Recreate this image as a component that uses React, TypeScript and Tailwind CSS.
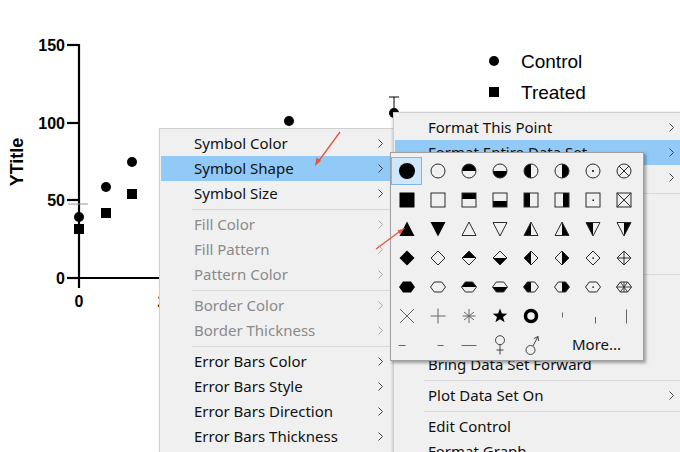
import React from 'react';

type Item = { label: string; sub?: boolean; disabled?: boolean; active?: boolean } | 'sep';

const leftItems: Item[] = [
  { label: 'Symbol Color', sub: true },
  { label: 'Symbol Shape', sub: true, active: true },
  { label: 'Symbol Size', sub: true },
  'sep',
  { label: 'Fill Color', sub: true, disabled: true },
  { label: 'Fill Pattern', sub: true, disabled: true },
  { label: 'Pattern Color', sub: true, disabled: true },
  'sep',
  { label: 'Border Color', sub: true, disabled: true },
  { label: 'Border Thickness', sub: true, disabled: true },
  'sep',
  { label: 'Error Bars Color', sub: true },
  { label: 'Error Bars Style', sub: true },
  { label: 'Error Bars Direction', sub: true },
  { label: 'Error Bars Thickness', sub: true },
  'sep',
];

const rightItems: Item[] = [
  { label: 'Format This Point', sub: true },
  { label: 'Format Entire Data Set', sub: true, active: true },
  { label: 'Format Data Set Line', sub: true },
  'sep',
  { label: 'Delete Data Set' },
  { label: 'Hide Data Set' },
  { label: 'Remove Data Set' },
  'sep',
  { label: 'Add Data Set' },
  { label: 'Send Data Set Back' },
  { label: 'Send Data Set Backward' },
  { label: 'Bring Data Set Forward' },
  'sep',
  { label: 'Plot Data Set On', sub: true },
  'sep',
  { label: 'Edit Control' },
  { label: 'Format Graph' },
];

function Chevron({ dim }: { dim?: boolean }) {
  return (
    <svg width="5" height="9" viewBox="0 0 5 9" className={dim ? 'text-[#a8a8a8]' : 'text-[#444]'}>
      <polyline points="0.5,0.5 4.5,4.5 0.5,8.5" fill="none" stroke="currentColor" strokeWidth="1" />
    </svg>
  );
}

function Menu({ items, sepIndent }: { items: Item[]; sepIndent: string }) {
  return (
    <div className="flex flex-col px-[1px] pt-[2px] pb-2">
      {items.map((it, i) =>
        it === 'sep' ? (
          <div key={i} className={`flex h-[6px] items-center ${sepIndent}`}>
            <div className="h-px flex-1 bg-[#d7d7d7]" />
          </div>
        ) : (
          <div
            key={i}
            className={`flex h-[25px] items-center pl-[33px] pr-[9px] ${it.active ? 'bg-[#91c9f7]' : ''} ${
              it.disabled ? 'text-[#8a8a8a]' : 'text-[#111]'
            }`}
          >
            <span className="flex-1 whitespace-nowrap text-[15px] leading-none">{it.label}</span>
            {it.sub && <Chevron dim={it.disabled} />}
          </div>
        )
      )}
    </div>
  );
}

const O = '#2a2a2a';
const L = '#666';

// shape families use a one-letter prefix plus an optional variant letter
const fam = (k: string, p: string) => k[0] === p && k.length <= 2;

function Glyph({ k }: { k: string }) {
  const c = (
    <>
      {k === 'cF' && <circle cx="10" cy="10" r="8" fill="#000" />}
      {fam(k, 'c') && k !== 'cF' && (
        <>
          {k === 'cT' && <path d="M3 10 A7 7 0 0 1 17 10 Z" fill="#000" />}
          {k === 'cB' && <path d="M3 10 A7 7 0 0 0 17 10 Z" fill="#000" />}
          {k === 'cL' && <path d="M10 3 A7 7 0 0 0 10 17 Z" fill="#000" />}
          {k === 'cR' && <path d="M10 3 A7 7 0 0 1 10 17 Z" fill="#000" />}
          {k === 'cD' && <circle cx="10" cy="10" r="1" fill="#000" />}
          {k === 'cX' && (
            <path d="M5.05 5.05 L14.95 14.95 M14.95 5.05 L5.05 14.95" stroke={O} strokeWidth="1" />
          )}
          <circle cx="10" cy="10" r="7" fill="none" stroke={O} strokeWidth="1" />
        </>
      )}
      {k === 'sF' && <rect x="2.5" y="2.5" width="15" height="15" fill="#000" />}
      {fam(k, 's') && k !== 'sF' && (
        <>
          {k === 'sT' && <rect x="3" y="3" width="14" height="6" fill="#000" />}
          {k === 'sB' && <rect x="3" y="11" width="14" height="6" fill="#000" />}
          {k === 'sL' && <rect x="3" y="3" width="6" height="14" fill="#000" />}
          {k === 'sR' && <rect x="11" y="3" width="6" height="14" fill="#000" />}
          {k === 'sD' && <rect x="9.5" y="9.5" width="1.5" height="1.5" fill="#000" />}
          {k === 'sX' && <path d="M3 3 L17 17 M17 3 L3 17" stroke={O} strokeWidth="1" />}
          <rect x="3" y="3" width="14" height="14" fill="none" stroke={O} strokeWidth="1" />
        </>
      )}
      {k === 'tUF' && <polygon points="10,2.5 17.5,17 2.5,17" fill="#000" />}
      {k === 'tDF' && <polygon points="2.5,3 17.5,3 10,17.5" fill="#000" />}
      {(k === 'tU' || k === 'tUL' || k === 'tUR') && (
        <>
          {k === 'tUL' && <polygon points="10,3 10,16.5 3,16.5" fill="#000" />}
          {k === 'tUR' && <polygon points="10,3 17,16.5 10,16.5" fill="#000" />}
          <polygon points="10,3 17,16.5 3,16.5" fill="none" stroke={O} strokeWidth="1" />
        </>
      )}
      {(k === 'tD' || k === 'tDL' || k === 'tDR') && (
        <>
          {k === 'tDL' && <polygon points="3,3.5 10,3.5 10,17" fill="#000" />}
          {k === 'tDR' && <polygon points="10,3.5 17,3.5 10,17" fill="#000" />}
          <polygon points="3,3.5 17,3.5 10,17" fill="none" stroke={O} strokeWidth="1" />
        </>
      )}
      {k === 'dF' && <polygon points="10,2.5 17.5,10 10,17.5 2.5,10" fill="#000" />}
      {fam(k, 'd') && k !== 'dF' && (
        <>
          {k === 'dT' && <polygon points="3,10 10,3 17,10" fill="#000" />}
          {k === 'dB' && <polygon points="3,10 10,17 17,10" fill="#000" />}
          {k === 'dL' && <polygon points="10,3 3,10 10,17" fill="#000" />}
          {k === 'dR' && <polygon points="10,3 17,10 10,17" fill="#000" />}
          {k === 'dD' && <rect x="9.4" y="9.4" width="1.4" height="1.4" fill="#000" />}
          {k === 'dP' && <path d="M10 3 L10 17 M3 10 L17 10" stroke={O} strokeWidth="1" />}
          <polygon points="10,3 17,10 10,17 3,10" fill="none" stroke={O} strokeWidth="1" />
        </>
      )}
      {k === 'hF' && <polygon points="2,10 6,4.5 14,4.5 18,10 14,15.5 6,15.5" fill="#000" />}
      {fam(k, 'h') && k !== 'hF' && (
        <>
          {k === 'hT' && <polygon points="2.5,10 6.3,5 13.7,5 17.5,10" fill="#000" />}
          {k === 'hB' && <polygon points="2.5,10 6.3,15 13.7,15 17.5,10" fill="#000" />}
          {k === 'hL' && <polygon points="10,5 6.3,5 2.5,10 6.3,15 10,15" fill="#000" />}
          {k === 'hR' && <polygon points="10,5 13.7,5 17.5,10 13.7,15 10,15" fill="#000" />}
          {k === 'hD' && <rect x="9.4" y="9.4" width="1.4" height="1.4" fill="#000" />}
          {k === 'hA' && (
            <path d="M2.5 10 L17.5 10 M6.3 5 L13.7 15 M13.7 5 L6.3 15 M10 5 L10 15" stroke={O} strokeWidth="0.9" />
          )}
          <polygon points="2.5,10 6.3,5 13.7,5 17.5,10 13.7,15 6.3,15" fill="none" stroke={O} strokeWidth="1" />
        </>
      )}
      {k === 'x' && <path d="M3 3 L17 17 M17 3 L3 17" stroke={L} strokeWidth="1" />}
      {k === 'plus' && <path d="M2.5 10 L17.5 10 M10 2.5 L10 17.5" stroke={L} strokeWidth="1" />}
      {k === 'ast' && (
        <path d="M10 3 L10 17 M3.5 10 L16.5 10 M5 6 L15 14 M15 6 L5 14" stroke={L} strokeWidth="1" />
      )}
      {k === 'star' && (
        <polygon
          points="10,2.5 11.9,7.6 17.3,7.7 13,11 14.6,16.3 10,13.2 5.4,16.3 7,11 2.7,7.7 8.1,7.6"
          fill="#000"
        />
      )}
      {k === 'ring' && <circle cx="10" cy="10" r="5.5" fill="none" stroke="#000" strokeWidth="3.5" />}
      {k === 'tickHi' && <path d="M10.5 6.5 L10.5 11.5" stroke={L} strokeWidth="1" />}
      {k === 'tickLo' && <path d="M12.5 11 L12.5 17.5" stroke={L} strokeWidth="1" />}
      {k === 'line' && <path d="M12.5 3.5 L12.5 17.5" stroke={L} strokeWidth="1" />}
      {k === 'dash1' && <path d="M1.5 10.5 L8.5 10.5" stroke={L} strokeWidth="1" />}
      {k === 'dash2' && <path d="M9.5 10.5 L15.5 10.5" stroke={L} strokeWidth="1" />}
      {k === 'dash3' && <path d="M2.5 10.5 L17.5 10.5" stroke={L} strokeWidth="1" />}
      {k === 'female' && (
        <>
          <circle cx="10" cy="5.2" r="4.5" fill="none" stroke="#444" strokeWidth="1" />
          <path d="M10 9.7 L10 19.5 M6.5 15 L13.5 15" stroke="#444" strokeWidth="1" />
        </>
      )}
      {k === 'male' && (
        <>
          <circle cx="9.5" cy="15" r="4.5" fill="none" stroke="#444" strokeWidth="1" />
          <path d="M12 11 L17 1.5 M17 1.5 L12.8 3.6 M17 1.5 L17.6 6" stroke="#444" strokeWidth="1" fill="none" />
        </>
      )}
    </>
  );
  return (
    <svg width="20" height="20" viewBox="0 0 20 20">
      {c}
    </svg>
  );
}

const grid = [
  ['cF', 'c', 'cT', 'cB', 'cL', 'cR', 'cD', 'cX'],
  ['sF', 's', 'sT', 'sB', 'sL', 'sR', 'sD', 'sX'],
  ['tUF', 'tDF', 'tU', 'tD', 'tUL', 'tUR', 'tDL', 'tDR'],
  ['dF', 'd', 'dT', 'dB', 'dL', 'dR', 'dD', 'dP'],
  ['hF', 'h', 'hT', 'hB', 'hL', 'hR', 'hD', 'hA'],
  ['x', 'plus', 'ast', 'star', 'ring', 'tickHi', 'tickLo', 'line'],
  ['dash1', 'dash2', 'dash3', 'female', 'male'],
];

function ShapePicker() {
  return (
    <div className="w-[254px] border border-[#a0a0a0] bg-[#f0f0f0] pt-[3px] pb-[1px] shadow-[2px_2px_3px_rgba(0,0,0,0.35)]">
      <div className="grid grid-cols-[repeat(8,31px)] grid-rows-[repeat(7,29px)]">
        {grid.flatMap((row, r) =>
          row.map((k, c) => (
            <div key={`${r}-${c}`} className="flex items-center justify-center">
              <div
                className={`flex h-[28px] w-[31px] items-center justify-center ${
                  r === 0 && c === 0 ? 'border border-[#7fb6e6] bg-[#cfe6fb]' : ''
                }`}
              >
                <Glyph k={k} />
              </div>
            </div>
          ))
        )}
        <div className="col-span-3 flex items-center pl-[26px] text-[15px] leading-none text-[#111]">More...</div>
      </div>
    </div>
  );
}

function Chart() {
  const ticks = [
    { y: 45, t: '150' },
    { y: 123, t: '100' },
    { y: 200, t: '50' },
    { y: 278, t: '0' },
  ];
  return (
    <svg width="680" height="452" className="absolute left-0 top-0" fontFamily="'Liberation Sans', Arial, sans-serif">
      <text x="17" y="162" fontSize="18" fontWeight="bold" textAnchor="middle" dominantBaseline="central" transform="rotate(-90 17 162)">
        YTitle
      </text>
      <line x1="79" y1="44" x2="79" y2="288" stroke="#000" strokeWidth="2.2" />
      <line x1="67" y1="278" x2="200" y2="278" stroke="#000" strokeWidth="2.2" />
      {ticks.map((tk) => (
        <g key={tk.t}>
          <line x1="67" y1={tk.y} x2="79" y2={tk.y} stroke="#000" strokeWidth="2.2" />
          <text x="65" y={tk.y} fontSize="16" fontWeight="bold" textAnchor="end" dominantBaseline="central">
            {tk.t}
          </text>
        </g>
      ))}
      <text x="79" y="301" fontSize="16" fontWeight="bold" textAnchor="middle" dominantBaseline="central">
        0
      </text>
      <text x="162" y="301" fontSize="16" fontWeight="bold" textAnchor="middle" dominantBaseline="central">
        2
      </text>
      <line x1="68" y1="204" x2="88" y2="204" stroke="#999" strokeWidth="1" />
      {[
        [79, 217],
        [106, 187],
        [132, 162],
        [289, 121],
        [394, 113],
      ].map(([x, y]) => (
        <circle key={`${x}`} cx={x} cy={y} r="5" fill="#000" />
      ))}
      {[
        [79, 229],
        [106, 213],
        [132, 194],
      ].map(([x, y]) => (
        <rect key={`${x}`} x={x - 5} y={y - 5} width="10" height="10" fill="#000" />
      ))}
      <line x1="394" y1="97" x2="394" y2="112" stroke="#000" strokeWidth="1" />
      <line x1="389" y1="97" x2="399" y2="97" stroke="#000" strokeWidth="1" />
      <circle cx="494" cy="61" r="5" fill="#000" />
      <text x="521" y="61" fontSize="19" dominantBaseline="central">
        Control
      </text>
      <rect x="489" y="87" width="10" height="10" fill="#000" />
      <text x="521" y="92" fontSize="19" dominantBaseline="central">
        Treated
      </text>
    </svg>
  );
}

function Arrows() {
  return (
    <svg width="680" height="452" className="pointer-events-none absolute left-0 top-0">
      <line x1="340" y1="132" x2="318" y2="162" stroke="#e8533f" strokeWidth="1.3" />
      <polygon points="315,166 316.5,157.5 321,160.8" fill="#e8533f" />
      <line x1="376" y1="249" x2="401" y2="230.5" stroke="#e8533f" strokeWidth="1.3" />
      <polygon points="405,228 400,234.5 397.5,230.5" fill="#e8533f" />
    </svg>
  );
}

export default function App() {
  return (
    <div className="relative h-[452px] w-[680px] overflow-hidden bg-white font-['Noto_Sans',sans-serif]">
      <Chart />
      <div className="absolute left-[159px] top-[128px] w-[235px] border border-[#cfcfcf] bg-[#f0f0f0]">
        <Menu items={leftItems} sepIndent="pl-[31px]" />
      </div>
      <div className="absolute left-[393px] top-[112px] w-[292px] border border-[#cfcfcf] bg-[#f0f0f0] shadow-[-1px_0_2px_rgba(0,0,0,0.15)]">
        <Menu items={rightItems} sepIndent="pl-[29px]" />
      </div>
      <div className="absolute left-[390px] top-[152px]">
        <ShapePicker />
      </div>
      <Arrows />
    </div>
  );
}
